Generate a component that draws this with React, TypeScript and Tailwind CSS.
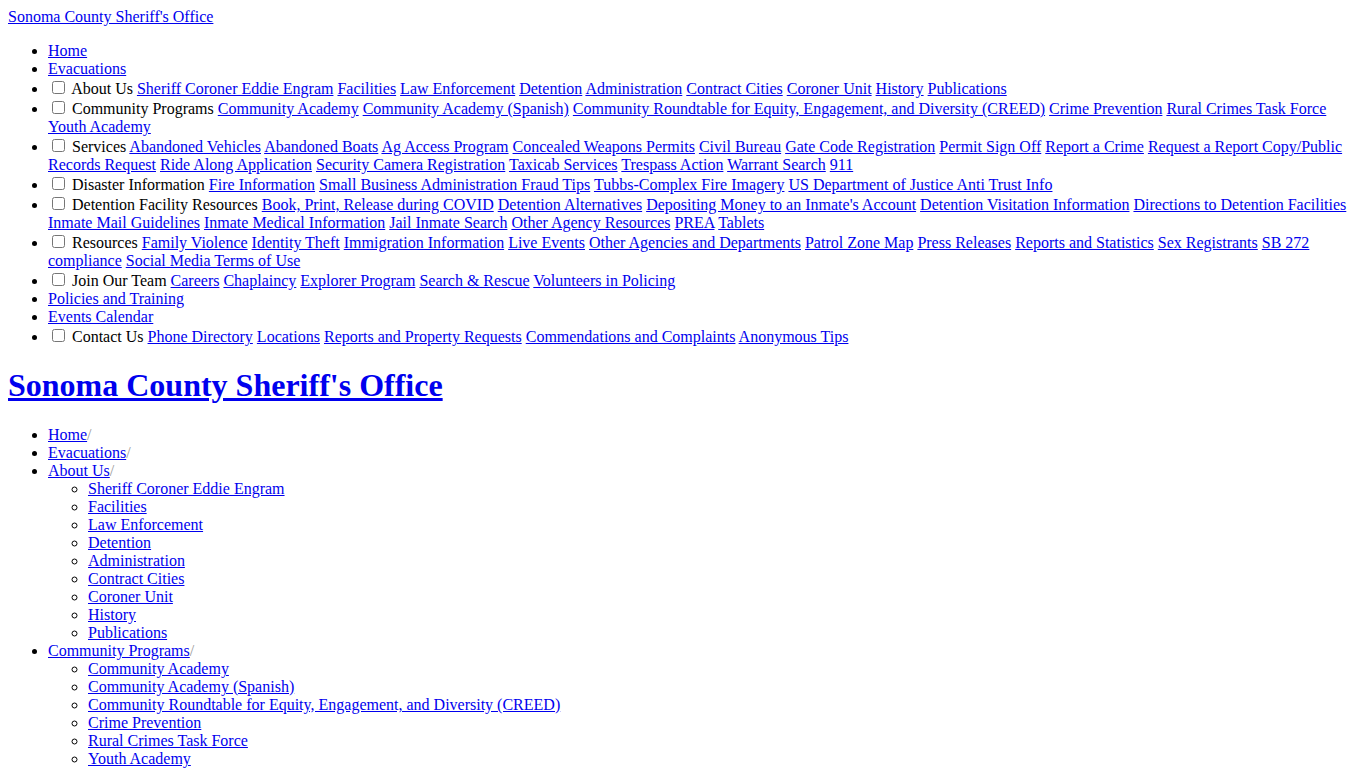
import React from "react";

type Item = { label: string; links?: string[] };

const menu: Item[] = [
  { label: "Home" },
  { label: "Evacuations" },
  {
    label: "About Us",
    links: [
      "Sheriff Coroner Eddie Engram",
      "Facilities",
      "Law Enforcement",
      "Detention",
      "Administration",
      "Contract Cities",
      "Coroner Unit",
      "History",
      "Publications",
    ],
  },
  {
    label: "Community Programs",
    links: [
      "Community Academy",
      "Community Academy (Spanish)",
      "Community Roundtable for Equity, Engagement, and Diversity (CREED)",
      "Crime Prevention",
      "Rural Crimes Task Force",
      "Youth Academy",
    ],
  },
  {
    label: "Services",
    links: [
      "Abandoned Vehicles",
      "Abandoned Boats",
      "Ag Access Program",
      "Concealed Weapons Permits",
      "Civil Bureau",
      "Gate Code Registration",
      "Permit Sign Off",
      "Report a Crime",
      "Request a Report Copy/Public Records Request",
      "Ride Along Application",
      "Security Camera Registration",
      "Taxicab Services",
      "Trespass Action",
      "Warrant Search",
      "911",
    ],
  },
  {
    label: "Disaster Information",
    links: [
      "Fire Information",
      "Small Business Administration Fraud Tips",
      "Tubbs-Complex Fire Imagery",
      "US Department of Justice Anti Trust Info",
    ],
  },
  {
    label: "Detention Facility Resources",
    links: [
      "Book, Print, Release during COVID",
      "Detention Alternatives",
      "Depositing Money to an Inmate's Account",
      "Detention Visitation Information",
      "Directions to Detention Facilities",
      "Inmate Mail Guidelines",
      "Inmate Medical Information",
      "Jail Inmate Search",
      "Other Agency Resources",
      "PREA",
      "Tablets",
    ],
  },
  {
    label: "Resources",
    links: [
      "Family Violence",
      "Identity Theft",
      "Immigration Information",
      "Live Events",
      "Other Agencies and Departments",
      "Patrol Zone Map",
      "Press Releases",
      "Reports and Statistics",
      "Sex Registrants",
      "SB 272 compliance",
      "Social Media Terms of Use",
    ],
  },
  {
    label: "Join Our Team",
    links: ["Careers", "Chaplaincy", "Explorer Program", "Search & Rescue", "Volunteers in Policing"],
  },
  { label: "Policies and Training" },
  { label: "Events Calendar" },
  {
    label: "Contact Us",
    links: [
      "Phone Directory",
      "Locations",
      "Reports and Property Requests",
      "Commendations and Complaints",
      "Anonymous Tips",
    ],
  },
];

function A({ children }: { children: React.ReactNode }) {
  return (
    <a href="#" className="text-[#0000EE] underline">
      {children}
    </a>
  );
}

export default function App() {
  return (
    <div className="font-['Liberation_Serif','Times_New_Roman',serif] text-[16px] leading-[normal] text-black bg-white p-2 min-h-screen">
      <div>
        <A>Sonoma County Sheriff's Office</A>
      </div>
      <ul className="list-disc pl-10 my-4">
        {menu.map((m) =>
          m.links ? (
            <li key={m.label}>
              <input type="checkbox" className="m-[3px_3px_3px_4px]" /> {m.label}{" "}
              {m.links.map((l, i) => (
                <React.Fragment key={l}>
                  <A>{l}</A>
                  {i < m.links!.length - 1 ? " " : ""}
                </React.Fragment>
              ))}
            </li>
          ) : (
            <li key={m.label}>
              <A>{m.label}</A>
            </li>
          )
        )}
      </ul>
      <h1 className="text-[32px] font-bold my-[21.44px]">
        <A>Sonoma County Sheriff's Office</A>
      </h1>
      <ul className="list-disc pl-10 my-4">
        {menu.map((m) => (
          <li key={m.label}>
            <A>{m.label}</A>
            <span className="text-[#999999]">/</span>
            {m.links && (
              <ul className="list-[circle] pl-10">
                {m.links.map((l) => (
                  <li key={l}>
                    <A>{l}</A>
                  </li>
                ))}
              </ul>
            )}
          </li>
        ))}
      </ul>
    </div>
  );
}
